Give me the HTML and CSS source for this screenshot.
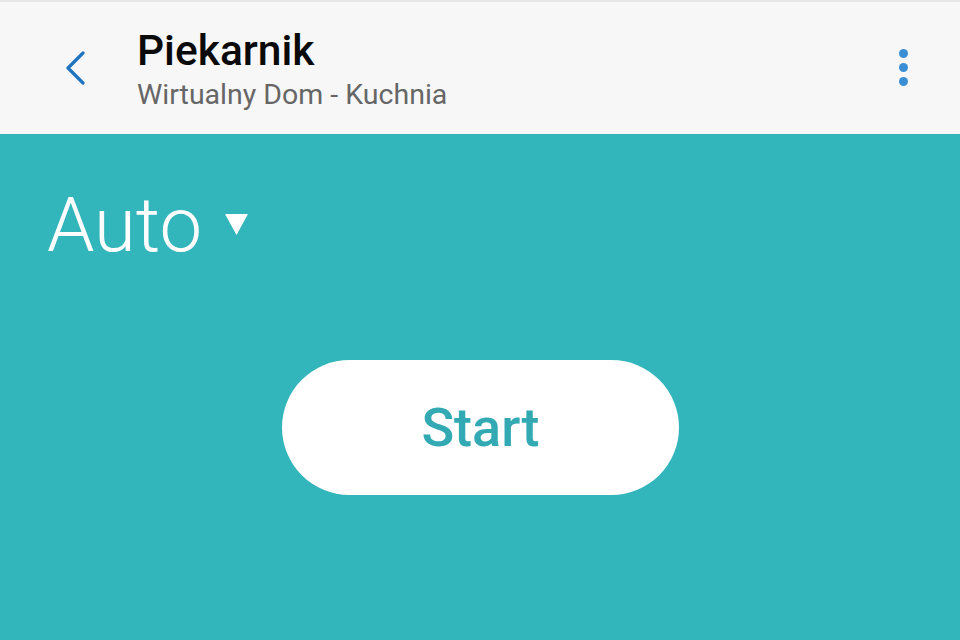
FILE: index.html
```html
<!DOCTYPE html>
<html lang="pl">
<head>
<meta charset="utf-8">
<title>Piekarnik</title>
<link rel="stylesheet" href="styles.css">
</head>
<body>
<div class="app">
  <header class="topbar">
    <button class="back" aria-label="Wstecz">
      <svg width="22" height="34" viewBox="0 0 22 34"><path d="M19 2 L4 17 L19 32" fill="none" stroke="#1f74bf" stroke-width="3.2" stroke-linecap="round" stroke-linejoin="round"/></svg>
    </button>
    <div class="titles">
      <div class="title">Piekarnik</div>
      <div class="subtitle">Wirtualny Dom - Kuchnia</div>
    </div>
    <button class="more" aria-label="Więcej">
      <span class="dot"></span><span class="dot"></span><span class="dot"></span>
    </button>
  </header>
  <main class="panel">
    <div class="mode">
      <span class="mode-label">Auto</span>
      <svg class="caret" width="23" height="21" viewBox="0 0 23 21"><path d="M0 0 H23 L11.5 21 Z" fill="#fff"/></svg>
    </div>
    <div class="actions">
      <button class="start">Start</button>
    </div>
  </main>
</div>
</body>
</html>
```

FILE: styles.css
```css
* { box-sizing: border-box; }
html, body { margin: 0; padding: 0; }
body {
  width: 960px;
  height: 640px;
  overflow: hidden;
  font-family: Roboto, "Liberation Sans", sans-serif;
  background: #33b5bc;
}
.app {
  display: flex;
  flex-direction: column;
  height: 640px;
}
.topbar {
  height: 134px;
  background: #f7f7f7;
  border-top: 2px solid #e6e6e6;
  display: flex;
  align-items: center;
  padding: 0 0 0 64px;
}
.back {
  border: 0;
  background: none;
  padding: 0;
  width: 22px;
  height: 34px;
  margin: 0 51px 0 0;
  display: flex;
}
.titles {
  flex: 1;
  display: flex;
  flex-direction: column;
  padding-top: 4px;
}
.title {
  font-size: 42.5px;
  font-weight: 500;
  color: #0a0a0a;
  line-height: 46px;
}
.subtitle {
  font-size: 28.5px;
  color: #666;
  line-height: 36px;
  margin-top: 3px;
}
.more {
  border: 0;
  background: none;
  padding: 0;
  width: 10px;
  margin-right: 51px;
  display: flex;
  flex-direction: column;
  gap: 5px;
  margin-top: -2px;
}
.dot {
  width: 9px;
  height: 9px;
  border-radius: 50%;
  background: #3a8fd4;
}
.panel {
  flex: 1;
  background: #33b5bc;
  display: flex;
  flex-direction: column;
  padding: 0 0 0 47px;
}
.mode {
  display: flex;
  align-items: center;
  margin-top: 45px;
  color: #fff;
}
.mode-label {
  font-size: 76px;
  font-weight: 300;
  line-height: 92px;
}
.caret {
  margin-left: 23px;
  margin-top: -2px;
}
.actions {
  display: flex;
  padding-left: 235px;
  margin-top: 89px;
}
.start {
  width: 397px;
  height: 135px;
  border: 0;
  border-radius: 68px;
  background: #fff;
  color: #33aab3;
  font-family: Roboto, "Liberation Sans", sans-serif;
  font-size: 54px;
  font-weight: 500;
  padding: 0;
}
```
